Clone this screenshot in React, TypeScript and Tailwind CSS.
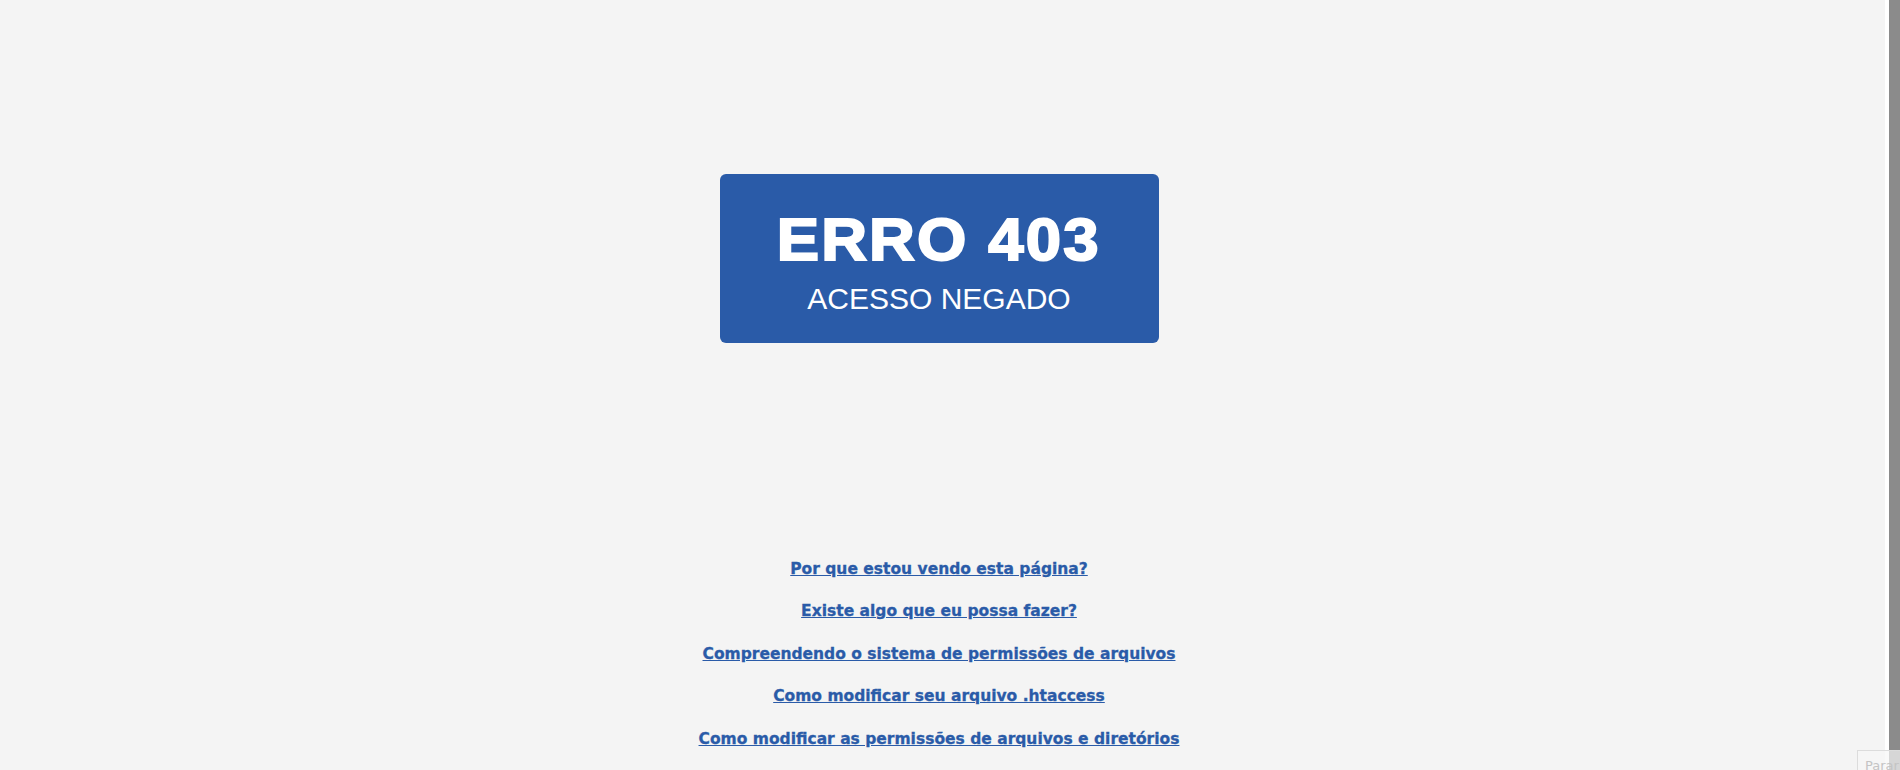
const links = [
  'Por que estou vendo esta página?',
  'Existe algo que eu possa fazer?',
  'Compreendendo o sistema de permissões de arquivos',
  'Como modificar seu arquivo .htaccess',
  'Como modificar as permissões de arquivos e diretórios',
];

export default function App() {
  return (
    <div className="relative flex h-[770px] w-full overflow-hidden bg-[#f4f4f4]">
      <main className="flex flex-1 flex-col items-center pr-[7px]">
        <div className="mt-[174px] flex w-[439px] flex-col items-center rounded-[6px] bg-[#2a5ba8] pt-[37px] pb-[30px] text-white font-['Liberation_Sans',Arial,sans-serif]">
          <h1 className="scale-x-[1.075] text-[59px] leading-[59px] font-bold tracking-[2px] [-webkit-text-stroke:2px_white]">
            ERRO 403
          </h1>
          <p className="mt-[14px] text-[30px] leading-[29px]">ACESSO NEGADO</p>
        </div>

        <ul className="mt-[204.5px] flex flex-col items-center font-['DejaVu_Sans',Verdana,sans-serif] text-[15.5px] font-bold">
          {links.map((l) => (
            <li key={l} className="leading-[42.6px]">
              <a href="#" className="text-[#2a5ba8] underline [-webkit-text-stroke:0.3px_#2a5ba8]">
                {l}
              </a>
            </li>
          ))}
        </ul>
      </main>

      {/* scrollbar */}
      <div className="w-[4px] bg-white" />
      <div className="w-[11px] bg-[#8b8b8b]" />

      <div className="absolute left-[1857px] top-[750px] h-[30px] w-[70px] border border-[#dcdcdc] bg-[#f6f6f6]/70 pl-[7px] pt-[5px] font-['DejaVu_Sans',sans-serif] text-[13px] text-[#c4c4c4]">
        Parar
      </div>
    </div>
  );
}
